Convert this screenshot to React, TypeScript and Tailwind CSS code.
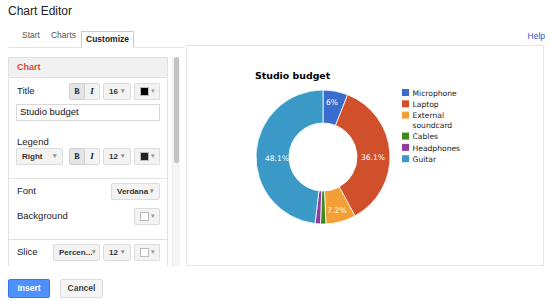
import React from 'react'

const slices = [
  { name: 'Microphone', value: 0.06, color: '#3a6cce', label: '6%', lx: 145, ly: 59 },
  { name: 'Laptop', value: 0.361, color: '#d1502c', label: '36.1%', lx: 186, ly: 114 },
  { name: 'External soundcard', value: 0.072, color: '#f49f35', label: '7.2%', lx: 150, ly: 167 },
  { name: 'Cables', value: 0.013, color: '#3d8b1f', label: '', lx: 0, ly: 0 },
  { name: 'Headphones', value: 0.013, color: '#8e3e9e', label: '', lx: 0, ly: 0 },
  { name: 'Guitar', value: 0.481, color: '#3a99c6', label: '48.1%', lx: 90, ly: 115 },
]

const legend = [
  { lines: ['Microphone'], color: '#3a6cce' },
  { lines: ['Laptop'], color: '#d1502c' },
  { lines: ['External', 'soundcard'], color: '#f49f35' },
  { lines: ['Cables'], color: '#3d8b1f' },
  { lines: ['Headphones'], color: '#8e3e9e' },
  { lines: ['Guitar'], color: '#3a99c6' },
]

function arc(cx: number, cy: number, r0: number, r1: number, a0: number, a1: number) {
  const p = (r: number, a: number) => {
    const t = (a - 0.25) * Math.PI * 2
    return `${(cx + r * Math.cos(t)).toFixed(2)} ${(cy + r * Math.sin(t)).toFixed(2)}`
  }
  const big = a1 - a0 > 0.5 ? 1 : 0
  return `M ${p(r1, a0)} A ${r1} ${r1} 0 ${big} 1 ${p(r1, a1)} L ${p(r0, a1)} A ${r0} ${r0} 0 ${big} 0 ${p(r0, a0)} Z`
}

function Caret() {
  return <span className="ml-auto text-[7px] text-[#999]">▾</span>
}

function Dropdown({ text, w }: { text: string; w: string }) {
  return (
    <div className={`${w} h-[17px] flex items-center pl-[5px] pr-[5px] bg-[#f3f3f3] border border-[#dcdcdc] rounded-[2px] text-[8px] font-bold text-[#333]`}>
      {text}
      <Caret />
    </div>
  )
}

function Swatch({ color }: { color: string }) {
  return (
    <div className="w-[26px] h-[17px] flex items-center pl-[5px] pr-[4px] bg-[#f3f3f3] border border-[#dcdcdc] rounded-[2px]">
      <div className="w-[9px] h-[9px] border border-[#bbb]" style={{ background: color }} />
      <Caret />
    </div>
  )
}

function StyleButtons() {
  return (
    <div className="flex">
      <div className="w-[16px] h-[17px] flex items-center justify-center bg-[#e5e5e5] border border-[#d0d0d0] rounded-l-[2px] text-[8px] font-black font-['Liberation_Serif',serif] text-[#222]">B</div>
      <div className="w-[15px] h-[17px] flex items-center justify-center bg-[#f3f3f3] border border-l-0 border-[#dcdcdc] rounded-r-[2px] text-[9px] italic font-bold font-['Liberation_Serif',serif] text-[#222]">I</div>
    </div>
  )
}

const chartFont = "'DejaVu Sans', Verdana, sans-serif"

function Donut() {
  let acc = 0
  const cx = 136
  const cy = 111
  return (
    <svg width="356" height="220" className="block">
      <text x="68" y="33" fontFamily={chartFont} fontWeight="bold" fontSize="9.4" fill="#000">Studio budget</text>
      {slices.map((s) => {
        const a0 = acc
        acc += s.value
        return <path key={s.name} d={arc(cx, cy, 34, 67, a0, acc)} fill={s.color} stroke="#fff" strokeWidth="0.8" />
      })}
      {slices.filter((s) => s.label).map((s) => (
        <text key={s.name} x={s.lx} y={s.ly} textAnchor="middle" fontFamily={chartFont} fontSize="7.6" fill="#fff">{s.label}</text>
      ))}
      {(() => {
        let y = 43
        return legend.map((l) => {
          const top = y
          y += l.lines.length === 2 ? 21 : 11.3
          return (
            <g key={l.lines[0]}>
              <rect x="215" y={top} width="7" height="7" fill={l.color} />
              {l.lines.map((t, i) => (
                <text key={t} x="225.5" y={top + 6.8 + i * 9.5} fontFamily={chartFont} fontSize="7.6" fill="#222">{t}</text>
              ))}
            </g>
          )
        })
      })()}
    </svg>
  )
}

export default function App() {
  return (
    <div className="w-[550px] h-[301px] bg-white overflow-hidden font-['Liberation_Sans',Arial,sans-serif] text-[#222] relative">
      <div className="pl-[8px] pt-[4px] h-[28px] text-[12px] leading-[14px]">Chart Editor</div>

      <div className="flex">
        {/* Left column */}
        <div className="w-[184px] shrink-0 pl-[8px]">
          {/* Tabs */}
          <div className="h-[20px] flex items-end border-b border-[#e3e3e3] text-[8.5px] text-[#555] pt-[3px]">
            <span className="ml-[14px] mb-[5px]">Start</span>
            <span className="ml-[11px] mb-[5px]">Charts</span>
            <div className="ml-[5px] -mb-px h-[17px] px-[4px] flex items-center bg-white border border-[#ccc] border-b-white font-bold text-[#222]">Customize</div>
          </div>

          <div className="flex mt-[9px]">
            {/* Panel */}
            <div className="w-[160px] h-[209px] overflow-hidden border border-b-0 border-[#e2e2e2]">
              <div className="h-[20px] bg-[#f1f1f1] border-b border-[#e2e2e2] flex items-center pl-[8px] text-[9px] font-bold text-[#d14836]">Chart</div>

              <div className="px-[7px] pt-[5px]">
                <div className="flex items-center h-[17px]">
                  <span className="ml-[1px] text-[9.5px]">Title</span>
                  <div className="ml-auto flex items-center gap-[3px]">
                    <StyleButtons />
                    <Dropdown text="16" w="w-[28px]" />
                    <Swatch color="#000" />
                  </div>
                </div>
                <div className="mt-[4px] h-[17px] border border-[#d9d9d9] flex items-center pl-[3px] text-[9.5px] text-[#111]">Studio budget</div>
                <div className="mt-[15px] text-[9.5px] leading-[11px] pl-[1px]">Legend</div>
                <div className="mt-[1px] flex items-center">
                  <Dropdown text="Right" w="w-[47px]" />
                  <div className="ml-auto flex items-center gap-[3px]">
                    <StyleButtons />
                    <Dropdown text="12" w="w-[28px]" />
                    <Swatch color="#222" />
                  </div>
                </div>
              </div>

              <div className="mt-[13px] border-t border-[#e2e2e2] px-[7px] pt-[4px] pb-[14px]">
                <div className="flex items-center h-[17px]">
                  <span className="ml-[1px] text-[9.5px]">Font</span>
                  <div className="ml-auto"><Dropdown text="Verdana" w="w-[49px]" /></div>
                </div>
                <div className="mt-[8px] flex items-center h-[17px]">
                  <span className="ml-[1px] text-[9.5px]">Background</span>
                  <div className="ml-auto"><Swatch color="#fff" /></div>
                </div>
              </div>

              <div className="border-t border-[#e2e2e2] px-[7px] pt-[4px]">
                <div className="flex items-center h-[17px]">
                  <span className="ml-[1px] text-[9.5px]">Slice</span>
                  <div className="ml-auto flex items-center gap-[3px]">
                    <Dropdown text="Percen..." w="w-[47px]" />
                    <Dropdown text="12" w="w-[28px]" />
                    <Swatch color="#fff" />
                  </div>
                </div>
              </div>
            </div>

            {/* Scrollbar */}
            <div className="ml-[4px] w-[8px] h-[209px] bg-[#f5f5f5] border-l border-[#ececec] pl-[1px]">
              <div className="w-[5px] h-[106px] bg-[#c2c2c2] rounded-[3px]" />
            </div>
          </div>
        </div>

        {/* Right column */}
        <div className="w-[358px] shrink-0 ml-[2px]">
          <div className="h-[17px] flex items-center justify-end text-[8.5px] text-[#1155cc] -mr-[1px]">Help</div>
          <div className="h-[221px] border border-[#e6e6e6]">
            <Donut />
          </div>
        </div>
      </div>

      <div className="flex pl-[8px] mt-[13px] gap-[10px]">
        <div className="w-[42px] h-[19px] flex items-center justify-center bg-[#4d90fe] border border-[#3079ed] rounded-[2px] text-[8.5px] font-bold text-white">Insert</div>
        <div className="w-[43px] h-[19px] flex items-center justify-center bg-[#f5f5f5] border border-[#dcdcdc] rounded-[2px] text-[8.5px] font-bold text-[#444]">Cancel</div>
      </div>
    </div>
  )
}
